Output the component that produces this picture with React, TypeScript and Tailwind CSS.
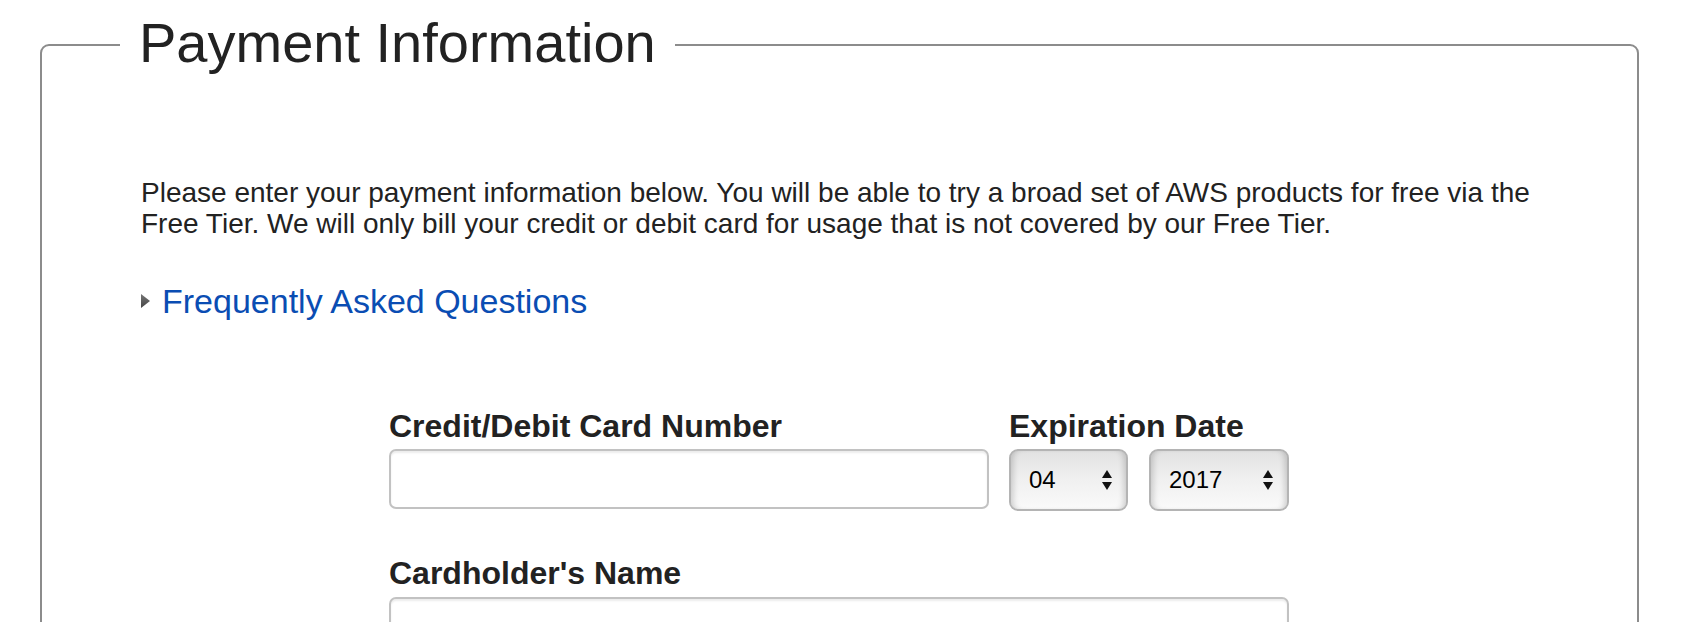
import React from "react";

const font = { fontFamily: '"Liberation Sans", Arial, Helvetica, sans-serif' };

function Arrows() {
  return (
    <svg width="10" height="20" viewBox="0 0 10 20" className="block">
      <path d="M5 0 L10 8 L0 8 Z" fill="#111" />
      <path d="M0 12 L10 12 L5 20 Z" fill="#111" />
    </svg>
  );
}

function FakeSelect({ value, width }: { value: string; width: string }) {
  return (
    <div
      className={`${width} h-[62px] flex items-center justify-between pl-[18px] pr-[14px] rounded-[9px] border-2 border-[#b4b4b4] bg-gradient-to-b from-[#e2e2e2] via-[#f0f0f0] to-[#fafafa] shadow-[inset_6px_0_6px_-4px_rgba(0,0,0,0.18),inset_-6px_0_6px_-4px_rgba(0,0,0,0.18)] text-[24px] text-black`}
    >
      <span>{value}</span>
      <Arrows />
    </div>
  );
}

export default function App() {
  return (
    <div className="bg-white min-h-[622px] pt-[15px] text-[#222]" style={font}>
      <fieldset className="ml-[40px] w-[1599px] border-2 border-[#8c8c8c] rounded-[9px] pl-[78px] pb-[80px]">
        <legend className="px-[19px] pb-[3px] text-[56px] leading-[56px] text-[#222]">
          Payment Information
        </legend>
        <div className="ml-[21px]">
          <p className="mt-[103px] text-[28px] leading-[31px] w-[1420px]">
            Please enter your payment information below. You will be able to try a broad set of AWS products for free via the Free Tier. We will only bill your credit or debit card for usage that is not covered by our Free Tier.
          </p>
          <div className="mt-[43px] flex items-center gap-[12px] h-[38px]">
            <svg width="9" height="14" viewBox="0 0 9 14" className="block">
              <defs>
                <linearGradient id="tri" x1="0" y1="0" x2="0" y2="1">
                  <stop offset="0" stopColor="#777" />
                  <stop offset="1" stopColor="#444" />
                </linearGradient>
              </defs>
              <path d="M0 0 L9 7 L0 14 Z" fill="url(#tri)" />
            </svg>
            <a className="text-[34px] leading-[38px] text-[#0a4db3]">Frequently Asked Questions</a>
          </div>
          <div className="ml-[248px] mt-[88px] w-[900px]">
            <div className="flex gap-[20px]">
              <div className="flex flex-col gap-[5px]">
                <label className="text-[32px] leading-[36px] font-bold">Credit/Debit Card Number</label>
                <div className="w-[600px] h-[60px] rounded-[7px] border-2 border-[#c2c2c2] bg-white shadow-[inset_0_2px_2px_rgba(0,0,0,0.08)]" />
              </div>
              <div className="flex flex-col gap-[5px]">
                <label className="text-[32px] leading-[36px] font-bold whitespace-nowrap">Expiration Date</label>
                <div className="flex gap-[21px]">
                  <FakeSelect value="04" width="w-[119px]" />
                  <FakeSelect value="2017" width="w-[140px]" />
                </div>
              </div>
            </div>
            <div className="mt-[44px] flex flex-col gap-[6px]">
              <label className="text-[32px] leading-[36px] font-bold">Cardholder's Name</label>
              <div className="w-[900px] h-[60px] rounded-[7px] border-2 border-[#c2c2c2] bg-white shadow-[inset_0_2px_2px_rgba(0,0,0,0.08)]" />
            </div>
          </div>
        </div>
      </fieldset>
    </div>
  );
}
